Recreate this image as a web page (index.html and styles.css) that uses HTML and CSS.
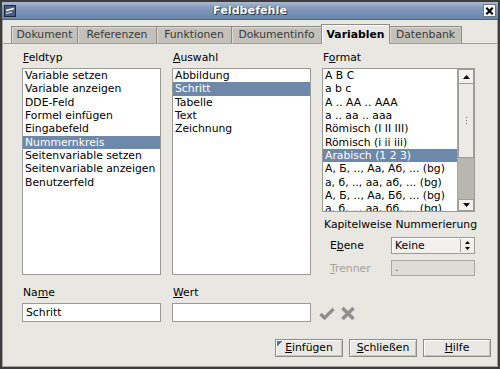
FILE: index.html
```html
<!DOCTYPE html>
<html>
<head>
<meta charset="utf-8">
<title>Feldbefehle</title>
<link rel="stylesheet" href="styles.css">
</head>
<body>
<div class="window">
  <div class="titlebar">
    <svg class="app-icon" width="12" height="12" viewBox="0 0 12 12">
      <rect x="0.5" y="0.5" width="11" height="11" fill="#4a5d7b" stroke="#1f2a3a"/>
      <path d="M2 5.5 L10 3.5" stroke="#fff" stroke-width="1.3"/>
      <path d="M2 8.5 L8 7" stroke="#dfe6f0" stroke-width="1.2"/>
    </svg>
    <span class="title">Feldbefehle</span>
    <span class="close">
      <svg width="12" height="12" viewBox="0 0 12 12"><path d="M2.5 2.5 L9.5 9.5 M9.5 2.5 L2.5 9.5" stroke="#000" stroke-width="2.4"/></svg>
    </span>
  </div>
  <div class="frame">
    <div class="tabs">
      <div class="tab tab-dokument">Dokument</div>
      <div class="tab tab-referenzen">Referenzen</div>
      <div class="tab tab-funktionen">Funktionen</div>
      <div class="tab tab-info">Dokumentinfo</div>
      <div class="tab active tab-variablen">Variablen</div>
      <div class="tab tab-datenbank">Datenbank</div>
    </div>
    <div class="page">
      <div class="columns">
        <div class="col">
          <div class="label"><u>F</u>eldtyp</div>
          <div class="list list-tall">
            <div class="item">Variable setzen</div>
            <div class="item">Variable anzeigen</div>
            <div class="item">DDE-Feld</div>
            <div class="item">Formel einfügen</div>
            <div class="item">Eingabefeld</div>
            <div class="item selected">Nummernkreis</div>
            <div class="item">Seitenvariable setzen</div>
            <div class="item">Seitenvariable anzeigen</div>
            <div class="item">Benutzerfeld</div>
          </div>
        </div>
        <div class="col">
          <div class="label"><u>A</u>uswahl</div>
          <div class="list list-tall">
            <div class="item">Abbildung</div>
            <div class="item selected">Schritt</div>
            <div class="item">Tabelle</div>
            <div class="item">Text</div>
            <div class="item">Zeichnung</div>
          </div>
        </div>
        <div class="col">
          <div class="label">F<u>o</u>rmat</div>
          <div class="list list-format">
            <div class="items">
              <div class="item">A B C</div>
              <div class="item">a b c</div>
              <div class="item">A .. AA .. AAA</div>
              <div class="item">a .. aa .. aaa</div>
              <div class="item">Römisch (I II III)</div>
              <div class="item">Römisch (i ii iii)</div>
              <div class="item selected">Arabisch (1 2 3)</div>
              <div class="item">А, Б, .., Аа, Аб, ... (bg)</div>
              <div class="item">а, б, .., аа, аб, ... (bg)</div>
              <div class="item">А, Б, .., Аа, Бб, ... (bg)</div>
              <div class="item">а, б, .., аа, бб, ... (bg)</div>
            </div>
            <div class="scrollbar">
              <div class="sb-btn">
                <svg width="7" height="4" viewBox="0 0 7 4"><path d="M0 4 L3.5 0 L7 4 Z" fill="#000"/></svg>
              </div>
              <div class="sb-thumb">
                <span class="grip"></span><span class="grip"></span><span class="grip"></span>
              </div>
              <div class="sb-track"></div>
              <div class="sb-btn sb-down">
                <svg width="7" height="4" viewBox="0 0 7 4"><path d="M0 0 L7 0 L3.5 4 Z" fill="#000"/></svg>
              </div>
            </div>
          </div>
          <div class="section-title">Kapitelweise Nummerierung</div>
          <div class="field-row">
            <span class="field-label">E<u>b</u>ene</span>
            <div class="select">
              <span class="select-text">Keine</span>
              <span class="spin">
                <svg width="5" height="9" viewBox="0 0 5 9"><path d="M0 3 L2.5 0 L5 3 Z M0 6 L5 6 L2.5 9 Z" fill="#000"/></svg>
              </span>
            </div>
          </div>
          <div class="field-row row-disabled">
            <span class="field-label disabled"><u>T</u>renner</span>
            <div class="input-disabled">.</div>
          </div>
        </div>
      </div>
      <div class="inputs-row">
        <div class="col-input">
          <div class="label">Na<u>m</u>e</div>
          <div class="textbox">Schritt</div>
        </div>
        <div class="col-input">
          <div class="label"><u>W</u>ert</div>
          <div class="textbox"></div>
        </div>
        <div class="icons">
          <svg width="16" height="13" viewBox="0 0 16 13"><path d="M1.5 7 L5.5 11 L14.5 2" fill="none" stroke="#8d8d8d" stroke-width="3.2"/></svg>
          <svg width="16" height="15" viewBox="0 0 16 15"><path d="M2.5 2 L13.5 13 M13.5 2 L2.5 13" stroke="#8f8f8f" stroke-width="3.6"/></svg>
        </div>
      </div>
    </div>
    <div class="buttons">
      <div class="button default"><u>E</u>infügen</div>
      <div class="button"><u>S</u>chließen</div>
      <div class="button"><u>H</u>ilfe</div>
    </div>
  </div>
</div>
</body>
</html>
```

FILE: styles.css
```css
* { box-sizing: border-box; }
html, body { margin: 0; padding: 0; }
body {
  width: 500px;
  height: 369px;
  overflow: hidden;
  background: #ffffff;
  font-family: "DejaVu Sans", "Bitstream Vera Sans", sans-serif;
  font-size: 10.8px;
  color: #000;
}
u { text-decoration: underline; text-underline-offset: 1px; }

.window {
  width: 500px;
  height: 369px;
  border: 2px solid #3c3c3c;
  background: #e8e7e2;
  display: flex;
  flex-direction: column;
}

.titlebar {
  height: 18px;
  flex: none;
  display: grid;
  grid-template-columns: 1fr auto 1fr;
  align-items: center;
  padding: 0 2px 0 2px;
  background: linear-gradient(to bottom, #a9bad2 0%, #8099bb 35%, #6a85ab 100%);
  border-bottom: 1px solid #4e6589;
}
.app-icon { justify-self: start; display: block; }
.title {
  font-weight: bold;
  font-size: 11px;
  color: #fff;
  text-shadow: 1px 1px 0 #2b3a55, -1px 0 0 #4a5f82;
  letter-spacing: 0.1px;
}
.close {
  justify-self: end;
  width: 13px;
  height: 13px;
  background: #fff;
  border: 1px solid #6a7a90;
  display: flex;
  align-items: center;
  justify-content: center;
}
.close svg { display: block; }

.frame {
  flex: 1;
  display: flex;
  flex-direction: column;
  border-left: 1px solid #a3a19a;
  border-right: 1px solid #a3a19a;
  border-bottom: 1px solid #a3a19a;
}

.tabs {
  height: 23px;
  flex: none;
  display: flex;
  align-items: flex-end;
  padding-left: 8px;
}
.tab {
  height: 17px;
  line-height: 16px;
  text-align: center;
  background: #c3c1b9;
  color: #3a3a3a;
  border: 1px solid #8e8c84;
  border-bottom: none;
  box-shadow: inset 1px 1px 0 #dcdad4;
  white-space: nowrap;
}
.tab + .tab { margin-left: -1px; }
.tab-dokument { width: 67px; }
.tab-referenzen { width: 80px; }
.tab-funktionen { width: 76px; }
.tab-info { width: 91px; }
.tab-variablen { width: 69px; }
.tab-datenbank { width: 73px; }
.tab.active {
  height: 20px;
  line-height: 19px;
  background: #e8e7e2;
  color: #000;
  font-weight: bold;
  margin-bottom: -1px;
  position: relative;
  box-shadow: inset 1px 1px 0 #fff;
}

.page {
  height: 290px;
  flex: none;
  border-top: 1px solid #a09e97;
  padding: 7px 0 0 19px;
}

.columns {
  display: grid;
  grid-template-columns: 139px 139px 153px;
  column-gap: 11px;
  align-items: start;
}
.col { display: flex; flex-direction: column; }
.label {
  height: 13px;
  line-height: 13px;
  padding-left: 1px;
  margin-bottom: 4px;
  white-space: nowrap;
}

.list {
  background: #fff;
  border: 1px solid #9c9a93;
  overflow: hidden;
}
.list-tall { height: 207px; }
.item {
  height: 13.33px;
  line-height: 13.33px;
  padding-left: 2px;
  white-space: nowrap;
}
.item.selected {
  background: #6e88a9;
  color: #fff;
}

.list-format {
  height: 144px;
  display: flex;
}
.items { flex: 1; overflow: hidden; }
.scrollbar {
  width: 17px;
  flex: none;
  display: flex;
  flex-direction: column;
  border-left: 1px solid #a8a69f;
  background: #b8b6ae;
}
.sb-btn {
  height: 15px;
  flex: none;
  background: #f3f2ef;
  border: 1px solid #9e9c95;
  display: flex;
  align-items: center;
  justify-content: center;
}
.sb-down { height: 12px; }
.sb-btn svg { display: block; }
.sb-thumb {
  height: 74px;
  flex: none;
  background: #ebeae6;
  border: 1px solid #9e9c95;
  border-top: none;
  display: flex;
  flex-direction: column;
  align-items: center;
  justify-content: center;
  gap: 2px;
}
.grip {
  width: 1px;
  height: 1px;
  background: #6c6a64;
}
.sb-track { flex: 1; background: #b8b6ae; }

.section-title {
  height: 13px;
  line-height: 13px;
  margin-top: 6px;
  padding-left: 2px;
  white-space: nowrap;
}
.field-row {
  display: flex;
  align-items: center;
  margin-top: 6px;
  padding-left: 8px;
}
.field-label { width: 61px; flex: none; }
.field-label.disabled { color: #a4a39e; }
.select {
  width: 84px;
  height: 17px;
  display: flex;
  align-items: center;
  background: #f1f0ec;
  border: 1px solid #9c9a93;
  box-shadow: inset 1px 1px 0 #fff;
}
.select-text { flex: 1; padding-left: 3px; }
.spin {
  width: 14px;
  height: 13px;
  border-left: 1px solid #9c9a93;
  display: flex;
  align-items: center;
  justify-content: center;
}
.spin svg { display: block; }
.input-disabled {
  width: 84px;
  height: 16px;
  line-height: 14px;
  padding-left: 3px;
  background: #dedcd6;
  border: 1px solid #a9a7a0;
  color: #555;
}

.inputs-row {
  display: flex;
  align-items: flex-start;
  margin-top: 10px;
  gap: 11px;
}
.col-input { width: 139px; display: flex; flex-direction: column; }
.textbox {
  height: 19px;
  line-height: 17px;
  padding-left: 3px;
  background: #fff;
  border: 1px solid #9c9a93;
}
.icons {
  display: flex;
  align-items: center;
  gap: 5px;
  margin-top: 20px;
  margin-left: -3px;
}
.icons svg { display: block; }

.buttons {
  display: flex;
  justify-content: flex-end;
  gap: 6px;
  padding-right: 6px;
  margin-top: 6px;
}
.button {
  width: 68px;
  height: 18px;
  line-height: 16px;
  text-align: center;
  background: #e9e8e4;
  border: 1px solid #8f8d86;
  box-shadow: inset 1px 1px 0 #fff, inset -1px -1px 0 #c4c2bb;
}
.button.default {
  background: linear-gradient(135deg, #52709a 0, #52709a 5px, transparent 5px), #e9e8e4;
}
```
